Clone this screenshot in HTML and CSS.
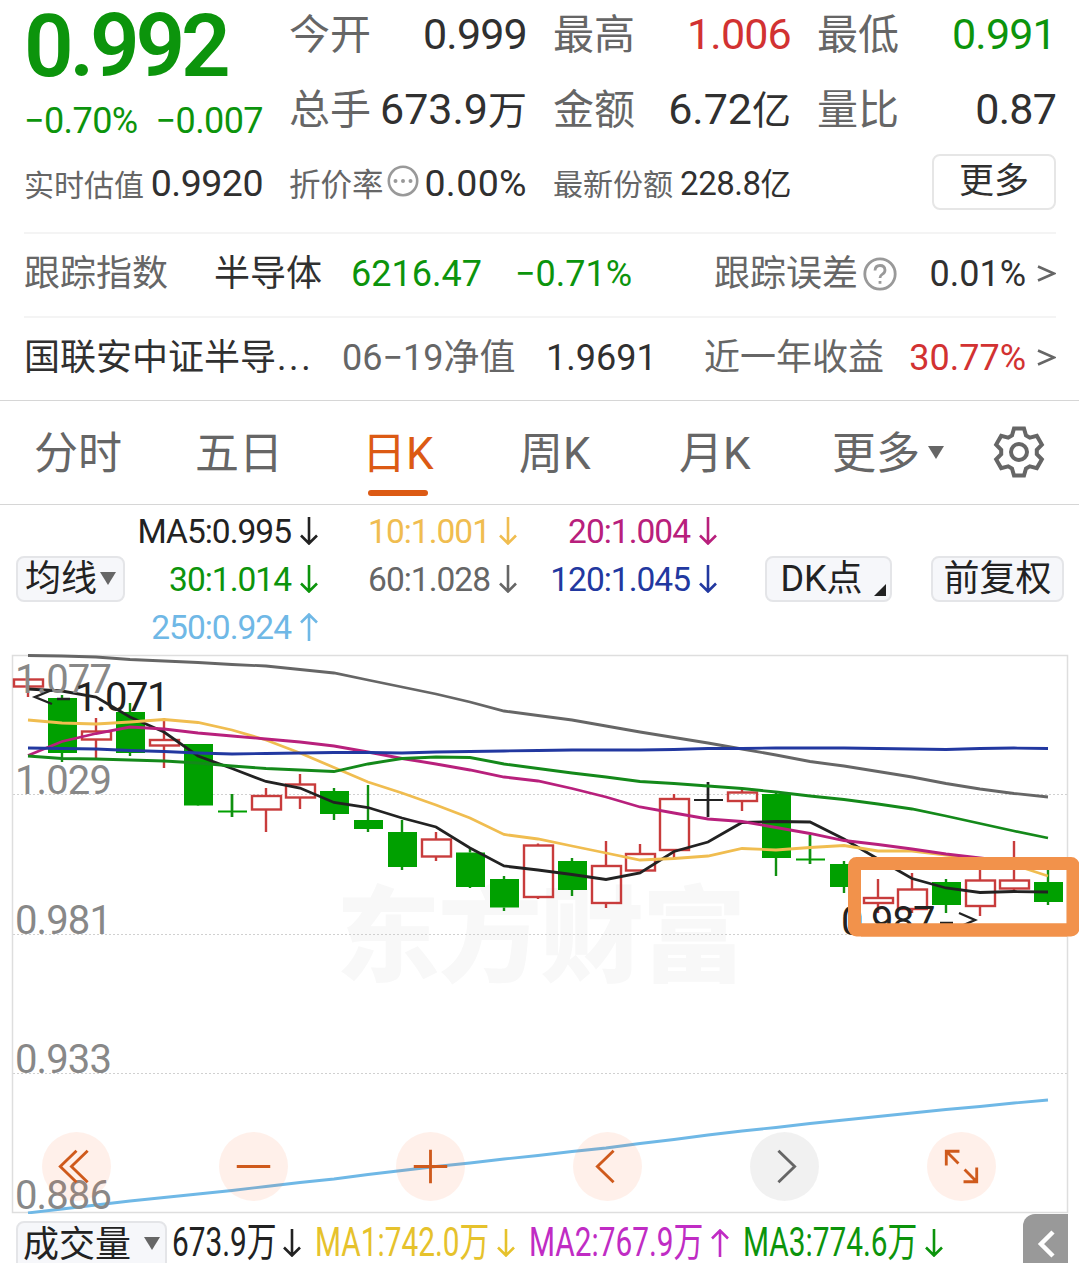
FILE: index.html
```
<!DOCTYPE html>
<html lang="zh-CN">
<head>
    <meta charset="UTF-8">
    <title>半导体ETF 日K</title>
    <link rel="stylesheet" href="styles.css">
</head>
<body>
    <!-- arrow shapes shared by the MA legends -->
    <svg class="defs" width="0" height="0">
        <symbol id="down" viewBox="0 0 20 28"><path d="M10 0V26M2 18.500L10 26.500L18 18.500"/></symbol>
        <symbol id="up" viewBox="0 0 20 28"><path d="M10 28V2M2 9.500L10 1.500L18 9.500"/></symbol>
    </svg>

    <!-- Quote -->
    <div class="quote">
        <div class="price-block">
            <div class="price green">0.992</div>
            <div class="change green"><span>−0.70%</span><span>−0.007</span></div>
        </div>
        <div class="cell"><span class="label">今开</span><span class="num">0.999</span></div>
        <div class="cell"><span class="label">最高</span><span class="num red">1.006</span></div>
        <div class="cell"><span class="label">最低</span><span class="num green">0.991</span></div>
        <div class="cell"><span class="label">总手</span><span class="num wide">673.9<i>万</i></span></div>
        <div class="cell"><span class="label">金额</span><span class="num wide">6.72<i>亿</i></span></div>
        <div class="cell"><span class="label">量比</span><span class="num">0.87</span></div>
    </div>
    <div class="quote-sub">
        <div class="cell"><span class="label">实时估值</span><span class="num">0.9920</span></div>
        <div class="cell">
            <span class="label rate">折价率</span>
            <svg class="dots" width="32" height="32" viewBox="0 0 32 32">
                <circle cx="16" cy="16" r="14.200"/>
                <path d="M8.500 16h0M16 16h0M23.500 16h0"/>
            </svg>
            <span class="num wide">0.00%</span>
        </div>
        <div class="cell"><span class="label">最新份额</span><span class="num small">228.8<i>亿</i></span></div>
        <button class="more">更多</button>
    </div>

    <!-- Tracking index and net value -->
    <div class="info index-row">
        <span class="gray">跟踪指数</span>
        <span>半导体</span>
        <span class="green">6216.47</span>
        <span class="green">−0.71%</span>
        <span class="gray help">跟踪误差<svg width="34" height="34" viewBox="0 0 34 34"><circle cx="17" cy="17" r="15.200"/><path d="M12 13.500q.300-5 5-5t5 4.600q0 2.700-2.800 4.300-2.200 1.300-2.200 3.600M17 24v2.800"/></svg></span>
        <span class="end">0.01%</span>
        <svg class="chev" width="19" height="20" viewBox="0 0 19 20"><path d="M1 2.500L17 9.500L1 16.500"/></svg>
    </div>
    <div class="info nav-row">
        <span>国联安中证半导<i class="more-dots">...</i></span>
        <span class="gray">06−19净值</span>
        <span>1.9691</span>
        <span class="gray">近一年收益</span>
        <span class="red end">30.77%</span>
        <svg class="chev" width="19" height="20" viewBox="0 0 19 20"><path d="M1 2.500L17 9.500L1 16.500"/></svg>
    </div>

    <!-- Period tabs -->
    <div class="tabs">
        <span>分时</span>
        <span>五日</span>
        <span class="active">日K</span>
        <span>周K</span>
        <span>月K</span>
        <span>更多<b class="tri"></b></span>
        <svg class="gear" width="54" height="54" viewBox="-27 -27 54 54">
            <path d="M-7-16.500L-5-23.500H5L7-16.500L10.800-14.300L17.850-16.100L22.850-7.400L17.800-2.200V2.200L22.850 7.400L17.850 16.100L10.800 14.300L7 16.500L5 23.500H-5L-7 16.500L-10.800 14.300L-17.850 16.100L-22.850 7.400L-17.800 2.200V-2.200L-22.850-7.400L-17.850-16.100L-10.800-14.300Z"/>
            <circle r="8"/>
        </svg>
    </div>

    <!-- MA legend -->
    <div class="legend">
        <button class="chip ma">均线<b class="tri"></b></button>
        <div class="ma-grid">
            <span class="c5">MA5:0.995<svg><use href="#down"/></svg></span>
            <span class="c10">10:1.001<svg><use href="#down"/></svg></span>
            <span class="c20">20:1.004<svg><use href="#down"/></svg></span>
            <span class="green">30:1.014<svg><use href="#down"/></svg></span>
            <span class="c60">60:1.028<svg><use href="#down"/></svg></span>
            <span class="c120">120:1.045<svg><use href="#down"/></svg></span>
            <span class="c250">250:0.924<svg><use href="#up"/></svg></span>
        </div>
        <button class="chip dk">DK点</button>
        <button class="chip fq">前复权</button>
    </div>

    <!-- K line chart -->
    <div class="chart">
        <svg width="1079" height="564" viewBox="0 650 1079 564">
            <text class="watermark" x="336" y="974" textLength="410">东方财富</text>
            <path class="grid" d="M13 794.500H1067M13 934.500H1067M13 1073.500H1067"/>
            <rect class="frame" x="12.500" y="655.500" width="1055" height="557"/>
            <g id="candles"></g>
            <g id="lines"></g>
            <g class="axis">
                <text x="15" y="692.500">1.077</text>
                <text x="15" y="794">1.029</text>
                <text x="15" y="934">0.981</text>
                <text x="15" y="1073">0.933</text>
                <text x="15" y="1209">0.886</text>
            </g>
            <g class="mark">
                <path d="M52 690L35 697L52 704M57 699H70"/>
                <text x="75" y="710.500">1.071</text>
                <text x="841" y="935">0.987</text>
                <path d="M940 923H953M959 913L975 920L959 927"/>
            </g>
            <path class="highlight-base" d="M861 930H1067"/>
            <rect class="highlight" x="854.500" y="863.500" width="218.500" height="66.500" rx="2"/>
        </svg>
        <div class="tools">
            <button><svg viewBox="-34 -34 68 68"><path d="M0-15.500L-16 0L0 15.500M11-15.500L-5 0L11 15.500"/></svg></button>
            <button><svg viewBox="-34 -34 68 68"><path d="M-16.500 0H16.500"/></svg></button>
            <button><svg viewBox="-34 -34 68 68"><path d="M-16.500 0H16.500M0-16.500V16.500"/></svg></button>
            <button><svg viewBox="-34 -34 68 68"><path d="M6-15.500L-10 0L6 15.500"/></svg></button>
            <button class="off"><svg viewBox="-34 -34 68 68"><path d="M-6-15.500L10 0L-6 15.500"/></svg></button>
            <button><svg viewBox="-34 -34 68 68"><path d="M-2-15H-15V-1M-15-15L-3-3M2 15H15V1M15 15L3 3"/></svg></button>
        </div>
    </div>

    <!-- Volume -->
    <div class="volume">
        <button class="chip vol">成交量<b class="tri"></b></button>
        <span class="v0 c5"><em>673.9万</em><svg><use href="#down"/></svg></span>
        <span class="v1"><em>MA1:742.0万</em><svg><use href="#down"/></svg></span>
        <span class="v2"><em>MA2:767.9万</em><svg><use href="#up"/></svg></span>
        <span class="v3 green"><em>MA3:774.6万</em><svg><use href="#down"/></svg></span>
        <div class="drawer"><svg width="20" height="32" viewBox="0 0 20 32"><path d="M16 4L4 16L16 28"/></svg></div>
    </div>

    <script>
        const STEP = 34;
        const FIRST = 28;

        // [kind, body top, body bottom, wick top, wick bottom]
        const candles = [
            ["r", 679.5, 686.5, 679.5, 697], ["g", 698, 753, 695, 762], ["r", 731.5, 739.5, 718, 758],
            ["g", 712, 753, 703, 756], ["r", 740, 745.5, 718, 768], ["g", 744, 805.5, 744, 806],
            ["g", 810.5, 812.5, 794, 817], ["r", 796, 809.5, 788, 832], ["r", 784.5, 797.5, 774, 809],
            ["g", 791, 814, 788, 820], ["g", 820, 829, 785, 832], ["g", 832, 867, 820, 870],
            ["r", 839.5, 856.5, 832, 861], ["g", 852.5, 887, 849, 888], ["g", 879, 907.5, 876, 911],
            ["r", 845.5, 897, 843.5, 899], ["g", 861, 890, 858, 896], ["r", 866, 903, 841, 908],
            ["r", 854, 870.5, 844, 870.5], ["r", 799, 850, 794, 858], ["k", 799, 801, 782, 817],
            ["r", 792.5, 801, 790, 811], ["g", 794, 858, 791.5, 876], ["g", 858.5, 860.5, 835, 864],
            ["g", 864, 887, 861, 893], ["r", 898, 903, 879, 913], ["r", 889.5, 909, 873, 913],
            ["g", 882, 905, 879, 913], ["r", 880.5, 906, 866, 916], ["r", 880.5, 888.5, 841, 891],
            ["g", 882, 902, 866, 905]
        ];

        const lines = {
            c60: [655.5, 656, 657, 659.5, 661, 662.5, 664.5, 666, 669.5, 673, 680, 687, 694, 702, 711, 715.5, 720, 726, 732, 737.5, 743, 749, 755, 761.5, 766, 771.5, 777, 783.5, 789, 793.5, 797],
            c5: [689, 691, 697, 717, 732, 756, 768.5, 781.5, 788, 802.5, 807.5, 818, 827, 848, 866, 870, 874.5, 879.5, 873, 851.5, 842, 822.5, 821.5, 822, 839, 859, 878.5, 888, 892.5, 891.5, 892],
            c10: [720, 723, 724, 722, 719.5, 722.5, 730, 740, 753, 767.5, 782, 793, 805, 818, 834.5, 839, 846, 853, 860, 858.5, 856, 848.5, 850, 847.5, 845.5, 851, 851, 855, 859, 865, 876],
            c20: [755.5, 741.5, 733.5, 727, 729, 733, 736, 739, 742, 746, 752, 758.5, 764, 770, 777, 781, 788.5, 797, 807, 813, 819, 821.5, 827.5, 833.5, 840.5, 844.5, 849, 854, 858, 862, 864],
            c30: [756, 758.5, 759, 760, 761, 763, 766, 768.5, 770, 771.5, 764, 758.5, 757, 757.5, 764, 768.5, 773, 777, 781.5, 783.5, 786, 788.5, 792, 796, 799.5, 804, 809, 816, 823.5, 831, 838],
            c120: [748, 748.5, 749, 750.5, 751.5, 753, 754, 753.5, 753, 752.5, 752.5, 753, 752, 751.5, 751, 750.5, 750, 750, 750, 749.5, 748.5, 748.5, 748, 748, 748, 748.5, 749, 749.5, 748.5, 748, 748.5],
            c250: [1213, 1209, 1205, 1201, 1197.5, 1194, 1190.5, 1186.5, 1182.5, 1179, 1174.5, 1170.5, 1166.5, 1163, 1159, 1155.5, 1151.5, 1148, 1143.5, 1139.5, 1135, 1131, 1127.5, 1123.5, 1120, 1116.5, 1113, 1109.5, 1106.5, 1103, 1100]
        };

        let shapes = "";
        candles.forEach(([kind, top, bottom, high, low], i) => {
            const x = FIRST + i * STEP;
            shapes += `<path class="${kind}" d="M${x} ${high}V${top}M${x} ${bottom}V${low}"/>`;
            if (kind === "r") {
                shapes += `<rect class="r" x="${x - 14}" y="${top}" width="29" height="${bottom - top}"/>`;
            } else {
                shapes += `<rect class="${kind} solid" x="${x - 14}" y="${top}" width="29" height="${bottom - top}"/>`;
            }
            if (bottom - top < 3) {
                shapes += `<path class="${kind}" d="M${x} ${high}V${low}"/>`;
            }
        });
        document.getElementById("candles").innerHTML = shapes;

        document.getElementById("lines").innerHTML = Object.entries(lines).map(([name, ys]) =>
            `<polyline class="${name}" points="${ys.map((y, i) => `${FIRST + i * STEP},${y}`).join(" ")}"/>`
        ).join("");
    </script>
</body>
</html>
```
FILE: styles.css
```
* {
    box-sizing: border-box;
}

body {
    margin: 0;
    width: 1079px;
    height: 1263px;
    overflow: hidden;
    background: #fff;
    color: #303030;
    font-family: Roboto, "Noto Sans CJK SC", sans-serif;
}

svg {
    display: block;
    flex: none;
    fill: none;
    stroke: currentColor;
    stroke-width: 2.6;
}

svg text {
    stroke: none;
}

.defs {
    position: absolute;
}

button {
    padding: 0;
    font-family: inherit;
    color: inherit;
}

i, em {
    font-style: normal;
}

.green {
    color: #0c940c;
}

.red {
    color: #d23232;
}

.gray, .label {
    color: #666;
}

/* quote */
.quote, .quote-sub {
    display: grid;
    grid-template-columns: 239px 238px 238px 239px;
    column-gap: 26px;
    padding-left: 24px;
}

.quote {
    grid-template-rows: 74px 74px;
}

.price-block {
    grid-row: 1 / 3;
}

.price {
    height: 92px;
    line-height: 92px;
    font-size: 87px;
    font-weight: 600;
    letter-spacing: -4.2px;
}

.change {
    display: flex;
    justify-content: space-between;
    line-height: 59px;
    font-size: 36px;
    letter-spacing: -0.6px;
}

.cell {
    display: flex;
    align-items: baseline;
    justify-content: space-between;
    line-height: 68px;
    white-space: nowrap;
}

.quote .cell:nth-child(n+5) {
    line-height: 70px;
}

.label {
    font-size: 41px;
}

.num {
    font-size: 43px;
    letter-spacing: -0.8px;
}

.num.wide {
    letter-spacing: 0;
}

.num i {
    font-size: 39px;
}

.quote-sub {
    height: 84px;
}

.quote-sub .cell {
    line-height: 71px;
}

.quote-sub .label {
    font-size: 30px;
}

.quote-sub .rate {
    font-size: 31.5px;
}

.quote-sub .num {
    font-size: 37.5px;
    letter-spacing: -0.5px;
}

.quote-sub .num.wide {
    letter-spacing: 0.4px;
}

.quote-sub .small {
    font-size: 33px;
}

.quote-sub .small i {
    font-size: 31px;
}

.dots {
    align-self: flex-start;
    margin: 17px 0 0 -1px;
    color: #999;
}

.dots path {
    stroke-width: 4;
    stroke-linecap: round;
}

.more {
    justify-self: end;
    width: 124px;
    height: 56px;
    margin-top: 6px;
    border: 2px solid #e6e6e6;
    border-radius: 8px;
    background: #fff;
    font-size: 35px;
    line-height: 50px;
}

/* tracking rows */
.info {
    display: grid;
    align-items: center;
    height: 84px;
    margin: 0 23px 0 24px;
    border-top: 2px solid #f4f4f4;
    padding-bottom: 2px;
    line-height: 78px;
    white-space: nowrap;
}

.index-row {
    grid-template-columns: 190px 137px 164px 199px 186px 126px 1fr;
}

.nav-row {
    grid-template-columns: 318px 204px 158px 196px 126px 1fr;
}

.info span {
    font-size: 36px;
}

.more-dots {
    padding-left: 1px;
    letter-spacing: 2.6px;
}

.help {
    display: flex;
    align-items: center;
}

.help svg {
    margin-left: 5px;
    color: #999;
    stroke-width: 2.8;
}

.end {
    justify-self: end;
}

.chev {
    justify-self: end;
    color: #666;
}

/* tabs */
.tabs {
    display: grid;
    grid-template-columns: 161px 169px 155px 160px 153px 160px 54px;
    align-items: center;
    height: 105px;
    padding-left: 34px;
    border-top: 1px solid #d6d6d6;
    border-bottom: 1px solid #d6d6d6;
    font-size: 44px;
    color: #666;
}

.tabs span {
    height: 103px;
    line-height: 106px;
}

.active {
    position: relative;
    margin-left: -2px;
}

.tabs .active {
    color: #dc5a14;
}

.active::after {
    content: "";
    position: absolute;
    left: 6px;
    bottom: 8px;
    width: 60px;
    height: 6px;
    border-radius: 3px;
    background: #dc5a14;
}

.tri {
    display: inline-block;
    margin-left: 8px;
    border: 8px solid transparent;
    border-top: 13px solid #666;
    border-bottom: 0;
    vertical-align: 7px;
}

.tabs .tri {
    vertical-align: 10px;
}

.gear {
    margin-bottom: 1px;
    stroke-width: 4;
}

/* legend */
.legend {
    display: flex;
    align-items: center;
    height: 145px;
    padding: 3px 15px 0 16px;
}

.chip {
    flex: none;
    height: 46px;
    border: 2px solid #e4e5e8;
    border-radius: 8px;
    background: #f6f7fa;
    color: #222;
    font-size: 36px;
    line-height: 42px;
    white-space: nowrap;
}

.ma {
    width: 109px;
}

.ma .tri {
    margin-left: 3px;
    vertical-align: 6px;
}

.ma-grid {
    display: grid;
    grid-template-columns: 194px 199px 200px;
    grid-auto-rows: 48px;
}

.ma-grid span {
    display: flex;
    align-items: center;
    justify-content: flex-end;
    gap: 8px;
    font-size: 33.5px;
    letter-spacing: -1px;
}

.ma-grid svg, .volume span svg {
    width: 20px;
    height: 28px;
}

.dk {
    position: relative;
    width: 127px;
    margin-left: 47px;
    padding-right: 14px;
}

.dk::after {
    content: "";
    position: absolute;
    right: 4px;
    bottom: 4px;
    border-left: 12px solid transparent;
    border-bottom: 12px solid #222;
}

.fq {
    width: 133px;
    margin-left: auto;
}

.c5 { color: #222; }
.c10 { color: #f0bd50; }
.c20 { color: #b8207c; }
.c30 { color: #14891a; }
.c60 { color: #666; }
.c120 { color: #2238a0; }
.c250 { color: #6fb8e6; }

/* chart */
.chart {
    position: relative;
    height: 564px;
}

.watermark {
    font-size: 104px;
    font-weight: 900;
    fill: #f8f8f8;
}

.grid {
    stroke: #d0d0d0;
    stroke-width: 1;
    stroke-dasharray: 2 2;
}

.frame {
    stroke: #dedede;
    stroke-width: 1.5;
}

#lines {
    stroke-width: 2.8;
}

.r {
    stroke: #c83c3c;
    stroke-width: 2.4;
}

.g {
    stroke: #109010;
    stroke-width: 2.4;
}

.k {
    stroke: #222;
    stroke-width: 2.4;
}

#lines polyline {
    stroke-width: 2.8;
}

.solid {
    stroke: none;
    fill: #00a000;
}

.k.solid {
    fill: #222;
}

.axis {
    font-size: 40px;
    letter-spacing: -0.9px;
    fill: #888;
}

.mark {
    font-size: 40px;
    letter-spacing: -1.5px;
    fill: #222;
    color: #222;
}

.mark path {
    fill: none;
    stroke-width: 2.4;
}

.highlight, .highlight-base {
    stroke: #f2924b;
    stroke-width: 13;
    stroke-linejoin: round;
}

.tools {
    position: absolute;
    top: 482px;
    left: 42px;
    display: flex;
    gap: 108px;
}

.tools button {
    width: 69px;
    height: 69px;
    border: 0;
    border-radius: 50%;
    background: rgba(255, 110, 50, 0.1);
    color: #cf5a1c;
}

.tools svg {
    width: 69px;
    height: 69px;
    stroke-width: 2.8;
}

.tools .off {
    background: rgba(100, 100, 100, 0.09);
    color: #666;
}

/* volume */
.volume {
    display: flex;
    align-items: flex-start;
    height: 50px;
    padding-left: 16px;
    overflow: hidden;
}

.vol {
    width: 151px;
    height: 60px;
    margin: 7px 5px 0 0;
    padding-bottom: 13px;
    line-height: 42px;
}

.vol .tri {
    margin-left: 13px;
}

.volume span {
    display: flex;
    align-items: center;
    justify-content: space-between;
    height: 56px;
    padding-top: 2px;
    margin-right: 13px;
    font-size: 40px;
    line-height: 50px;
    white-space: nowrap;
}

.volume em {
    width: 0;
    transform: scaleX(0.745);
    transform-origin: left;
}

.v0 { width: 130px; }
.v1 { width: 201px; color: #e6c22c; }
.v2 { width: 201px; color: #c02cc4; }
.v3 { width: 201px; }

.drawer {
    width: 45px;
    height: 50px;
    margin-left: auto;
    margin-right: 11px;
    padding: 14px 0 0 14px;
    border-radius: 12px 0 0 0;
    background: #999;
    color: #fff;
}

.drawer svg {
    stroke-width: 4.5;
}
```
